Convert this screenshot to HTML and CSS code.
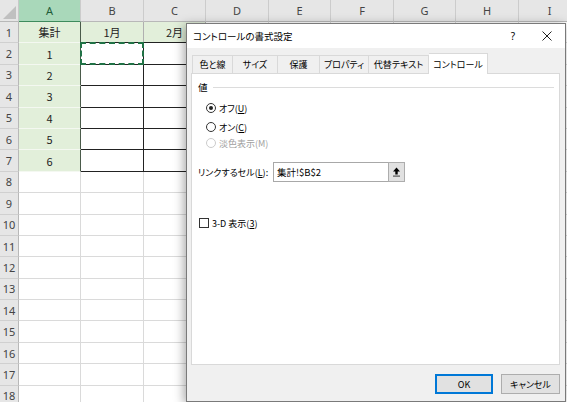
FILE: index.html
```html
<!DOCTYPE html>
<html lang="ja">
<head>
<meta charset="utf-8">
<title>コントロールの書式設定</title>
<link rel="stylesheet" href="styles.css">
</head>
<body>
<div class="sheet">
  <div class="corner"><span class="tri"></span></div>
  <div class="ch sel">A</div><div class="ch">B</div><div class="ch">C</div><div class="ch">D</div><div class="ch">E</div><div class="ch">F</div><div class="ch">G</div><div class="ch">H</div><div class="ch">I</div>

  <div class="rh">1</div><div class="c g a hd">集計</div><div class="c g b1">1月</div><div class="c g b1">2月</div><div class="c"></div><div class="c"></div><div class="c"></div><div class="c"></div><div class="c"></div><div class="c"></div>

  <div class="rh">2</div><div class="c g a">1</div><div class="c k marq"><span class="ants"></span></div><div class="c k"></div><div class="c"></div><div class="c"></div><div class="c"></div><div class="c"></div><div class="c"></div><div class="c"></div>
  <div class="rh">3</div><div class="c g a">2</div><div class="c k"></div><div class="c k"></div><div class="c"></div><div class="c"></div><div class="c"></div><div class="c"></div><div class="c"></div><div class="c"></div>
  <div class="rh">4</div><div class="c g a">3</div><div class="c k"></div><div class="c k"></div><div class="c"></div><div class="c"></div><div class="c"></div><div class="c"></div><div class="c"></div><div class="c"></div>
  <div class="rh">5</div><div class="c g a">4</div><div class="c k"></div><div class="c k"></div><div class="c"></div><div class="c"></div><div class="c"></div><div class="c"></div><div class="c"></div><div class="c"></div>
  <div class="rh">6</div><div class="c g a">5</div><div class="c k"></div><div class="c k"></div><div class="c"></div><div class="c"></div><div class="c"></div><div class="c"></div><div class="c"></div><div class="c"></div>
  <div class="rh">7</div><div class="c g a">6</div><div class="c k"></div><div class="c k"></div><div class="c"></div><div class="c"></div><div class="c"></div><div class="c"></div><div class="c"></div><div class="c"></div>

  <div class="rh">8</div><div class="c"></div><div class="c"></div><div class="c"></div><div class="c"></div><div class="c"></div><div class="c"></div><div class="c"></div><div class="c"></div><div class="c"></div>
  <div class="rh">9</div><div class="c"></div><div class="c"></div><div class="c"></div><div class="c"></div><div class="c"></div><div class="c"></div><div class="c"></div><div class="c"></div><div class="c"></div>
  <div class="rh">10</div><div class="c"></div><div class="c"></div><div class="c"></div><div class="c"></div><div class="c"></div><div class="c"></div><div class="c"></div><div class="c"></div><div class="c"></div>
  <div class="rh">11</div><div class="c"></div><div class="c"></div><div class="c"></div><div class="c"></div><div class="c"></div><div class="c"></div><div class="c"></div><div class="c"></div><div class="c"></div>
  <div class="rh">12</div><div class="c"></div><div class="c"></div><div class="c"></div><div class="c"></div><div class="c"></div><div class="c"></div><div class="c"></div><div class="c"></div><div class="c"></div>
  <div class="rh">13</div><div class="c"></div><div class="c"></div><div class="c"></div><div class="c"></div><div class="c"></div><div class="c"></div><div class="c"></div><div class="c"></div><div class="c"></div>
  <div class="rh">14</div><div class="c"></div><div class="c"></div><div class="c"></div><div class="c"></div><div class="c"></div><div class="c"></div><div class="c"></div><div class="c"></div><div class="c"></div>
  <div class="rh">15</div><div class="c"></div><div class="c"></div><div class="c"></div><div class="c"></div><div class="c"></div><div class="c"></div><div class="c"></div><div class="c"></div><div class="c"></div>
  <div class="rh">16</div><div class="c"></div><div class="c"></div><div class="c"></div><div class="c"></div><div class="c"></div><div class="c"></div><div class="c"></div><div class="c"></div><div class="c"></div>
  <div class="rh">17</div><div class="c"></div><div class="c"></div><div class="c"></div><div class="c"></div><div class="c"></div><div class="c"></div><div class="c"></div><div class="c"></div><div class="c"></div>
  <div class="rh">18</div><div class="c"></div><div class="c"></div><div class="c"></div><div class="c"></div><div class="c"></div><div class="c"></div><div class="c"></div><div class="c"></div><div class="c"></div>
</div>

<div class="dialog">
  <div class="titlebar">
    <span class="title">コントロールの書式設定</span>
    <span class="help">?</span>
    <span class="close"><svg width="10" height="10" viewBox="0 0 10 10"><path d="M0.5 0.5L9.5 9.5M9.5 0.5L0.5 9.5" stroke="#222" stroke-width="1" fill="none"/></svg></span>
  </div>
  <div class="dbody">
    <div class="tabs">
      <div class="tab t1">色と線</div>
      <div class="tab t2">サイズ</div>
      <div class="tab t3">保護</div>
      <div class="tab t4">プロパティ</div>
      <div class="tab t5">代替テキスト</div>
      <div class="tab t6 active">コントロール</div>
    </div>
    <div class="panel">
      <div class="group"><span class="glabel">値</span><span class="gline"></span></div>
      <div class="opt first"><span class="radio on"></span><span>オフ(<u>U</u>)</span></div>
      <div class="opt second"><span class="radio"></span><span>オン(<u>C</u>)</span></div>
      <div class="opt third dis"><span class="radio"></span><span>淡色表示(M)</span></div>
      <div class="link">
        <span class="llabel">リンクするセル(<u>L</u>):</span>
        <div class="input">集計!$B$2</div>
        <div class="refbtn"><svg width="9" height="10" viewBox="0 0 9 10"><path d="M4.5 0.5L8 4.5H5.7V7.5H3.3V4.5H1Z" fill="#000"/><rect x="1" y="8.5" width="7" height="1.2" fill="#555"/></svg></div>
      </div>
      <div class="chk"><span class="box"></span><span>3-D 表示(<u>3</u>)</span></div>
    </div>
    <div class="footer">
      <button class="btn ok">OK</button>
      <button class="btn">キャンセル</button>
    </div>
  </div>
</div>
</body>
</html>
```

FILE: styles.css
```css
html, body {
  margin: 0;
  padding: 0;
  background: #ffffff;
  overflow: hidden;
}
body {
  width: 567px;
  height: 402px;
  position: relative;
  font-family: "Noto Sans CJK JP", "Noto Sans", sans-serif;
}

/* ---------- spreadsheet ---------- */
.sheet {
  display: grid;
  grid-template-columns: 19px 62px 63px 62px 63px 62px 63px 62px 63px 62px;
  grid-template-rows: 22px repeat(18, 21.4px);
}
.sheet > div {
  box-sizing: border-box;
}
.corner {
  background: #e6e6e6;
  border-right: 1px solid #c8c8c8;
  border-bottom: 1px solid #b8b8b8;
  position: relative;
}
.tri {
  position: absolute;
  right: 2px;
  bottom: 2px;
  width: 13px;
  height: 13px;
  background: #c0c0c0;
  clip-path: polygon(100% 0, 100% 100%, 0 100%);
}
.ch {
  background: #e6e6e6;
  border-right: 1px solid #cccccc;
  border-bottom: 1px solid #b8b8b8;
  color: #444;
  font-family: "Noto Sans", "Liberation Sans", sans-serif;
  font-size: 11px;
  display: flex;
  align-items: center;
  justify-content: center;
}
.ch.sel {
  background: #a9d8ba;
  color: #1f5c38;
  border-bottom: 1px solid #3e8b5d;
}
.rh {
  background: #e6e6e6;
  border-right: 1px solid #b8b8b8;
  border-bottom: 1px solid #d0d0d0;
  color: #444;
  font-family: "Noto Sans", "Liberation Sans", sans-serif;
  font-size: 11px;
  display: flex;
  align-items: center;
  justify-content: center;
}
.c {
  border-right: 1px solid #dadada;
  border-bottom: 1px solid #dadada;
  font-size: 11px;
  color: #222;
  display: flex;
  align-items: center;
  justify-content: center;
}
.c.g {
  background: #e2efda;
}
.c.a {
  border-right: 1px solid #4a5a4a;
  border-bottom: 1px solid #f4f8f1;
}
.c.b1 {
  border-right: 1px solid #b0b0b0;
  border-bottom: 1px solid #222;
}
.c.k {
  border-right: 1px solid #222;
  border-bottom: 1px solid #222;
}
.marq {
  position: relative;
}
.ants {
  position: absolute;
  left: -1px;
  top: -1px;
  right: -1px;
  bottom: -1px;
  border: 2px dashed #217346;
}

/* ---------- dialog ---------- */
.dialog {
  position: absolute;
  left: 186px;
  top: 23px;
  width: 380px;
  height: 379px;
  box-sizing: border-box;
  border: 1px solid #7a7a7a;
  background: #f0f0f0;
  box-shadow: -2px 2px 10px rgba(0, 0, 0, 0.35);
  display: flex;
  flex-direction: column;
  font-size: 9px;
  font-feature-settings: "palt";
  color: #000;
}
.titlebar {
  height: 24px;
  background: #ffffff;
  display: flex;
  align-items: center;
  padding-left: 6px;
  flex: none;
}
.title {
  flex: 1;
  font-size: 9.5px;
}
.help {
  width: 12px;
  text-align: center;
  font-family: "Noto Sans", sans-serif;
  font-size: 10px;
  margin-right: 23px;
}
.close {
  display: flex;
  margin-right: 13px;
}
.dbody {
  flex: 1;
  display: flex;
  flex-direction: column;
  padding: 7px 5px 0 4px;
}
.tabs {
  display: flex;
  height: 18px;
  align-items: flex-end;
  margin-left: 1px;
  position: relative;
  z-index: 1;
}
.tab {
  height: 18px;
  box-sizing: border-box;
  border: 1px solid #d9d9d9;
  border-bottom: none;
  border-right: none;
  background: #f0f0f0;
  display: flex;
  align-items: center;
  justify-content: center;
}
.t1 { width: 40px; }
.t2 { width: 45px; }
.t3 { width: 42px; }
.t4 { width: 49px; }
.t5 { width: 61px; border-right: 1px solid #d9d9d9; }
.t6 { width: 59px; }
.tab.active {
  background: #ffffff;
  height: 21px;
  margin-bottom: -1px;
  border-right: 1px solid #d9d9d9;
  border-left: none;
}
.panel {
  height: 292px;
  box-sizing: border-box;
  background: #ffffff;
  border: 1px solid #d9d9d9;
  padding: 6px 0 0 6px;
  display: flex;
  flex-direction: column;
}
.group {
  height: 14px;
  display: flex;
  align-items: center;
  margin-right: 5px;
}
.glabel {
  font-size: 9.5px;
}
.gline {
  flex: 1;
  height: 1px;
  background: #dcdcdc;
  margin-left: 5px;
  margin-top: 1px;
}
.opt {
  height: 16px;
  display: flex;
  align-items: center;
  margin-left: 8px;
}
.opt.first { margin-top: 6px; }
.opt.second { margin-top: 3px; }
.opt.third { margin-top: 0; }
.opt.dis { color: #a0a0a0; }
.radio {
  width: 10px;
  height: 10px;
  box-sizing: border-box;
  border: 1px solid #333;
  border-radius: 50%;
  margin-right: 3px;
  display: flex;
  align-items: center;
  justify-content: center;
  background: #fff;
}
.radio.on::after {
  content: "";
  width: 4px;
  height: 4px;
  border-radius: 50%;
  background: #222;
}
.opt.dis .radio {
  border-color: #cccccc;
}
u {
  text-decoration: underline;
  text-underline-offset: 1px;
}
.link {
  height: 20px;
  margin-top: 11px;
  display: flex;
  align-items: center;
}
.llabel {
  width: 75px;
  flex: none;
}
.input {
  width: 115px;
  height: 20px;
  box-sizing: border-box;
  border: 1px solid #a8a8a8;
  border-right: none;
  display: flex;
  align-items: center;
  padding-left: 3px;
  font-size: 9.5px;
}
.refbtn {
  width: 17px;
  height: 20px;
  box-sizing: border-box;
  border: 1px solid #adadad;
  background: #e1e1e1;
  display: flex;
  align-items: center;
  justify-content: center;
}
.chk {
  height: 14px;
  margin-top: 34px;
  display: flex;
  align-items: center;
  margin-left: 1px;
}
.box {
  width: 10px;
  height: 10px;
  box-sizing: border-box;
  border: 1px solid #333;
  background: #fff;
  margin-right: 3px;
}
.footer {
  display: flex;
  justify-content: flex-end;
  gap: 8px;
  padding-top: 9px;
}
.btn {
  width: 59px;
  height: 20px;
  box-sizing: border-box;
  border: 1px solid #adadad;
  background: #e1e1e1;
  font-family: "Noto Sans CJK JP", "Noto Sans", sans-serif;
  font-feature-settings: "palt";
  font-size: 9px;
  color: #000;
  padding: 0;
  margin: 0;
}
.btn.ok {
  border: 1px solid #0078d7;
  box-shadow: inset 0 0 0 1px #0078d7;
  width: 58px;
}
```
